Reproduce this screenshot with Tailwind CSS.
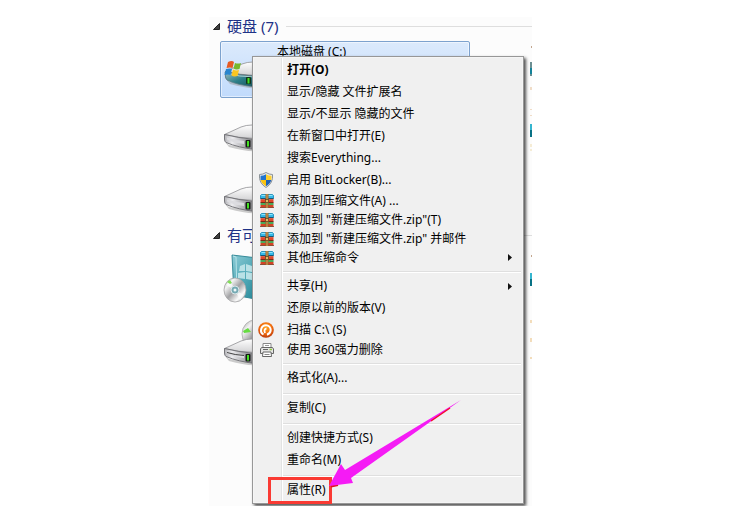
<!DOCTYPE html>
<html lang="zh-CN">

<head>
    <meta charset="UTF-8">
    <meta name="viewport" content="width=device-width, initial-scale=1.0">
    <title>计算机</title>
    <script src="https://cdn.jsdelivr.net/npm/@tailwindcss/browser@4"></script>
</head>

<body class="bg-white pt-[17px] font-['Noto_Sans','Noto_Sans_CJK_SC',sans-serif] text-xs text-black">
    <!-- shared drawings -->
    <svg class="absolute size-0">
        <defs>
            <linearGradient id="top" x1="0" y1="0" x2="0" y2="1">
                <stop offset="0" stop-color="#fff" />
                <stop offset="1" stop-color="#d2d2d4" />
            </linearGradient>
            <linearGradient id="front" x1="0" y1="0" x2="1" y2="0">
                <stop offset="0" stop-color="#b4b4b8" />
                <stop offset=".25" stop-color="#ececef" />
                <stop offset=".6" stop-color="#b4b4b8" />
                <stop offset="1" stop-color="#77777b" />
            </linearGradient>
            <linearGradient id="disc" x1="0" y1="0" x2="1" y2="1">
                <stop offset="0" stop-color="#9d9d9d" />
                <stop offset=".25" stop-color="#f4f4f4" />
                <stop offset=".5" stop-color="#a2a2a4" />
                <stop offset=".75" stop-color="#fafafa" />
                <stop offset="1" stop-color="#999" />
            </linearGradient>
            <linearGradient id="teal" x1="0" y1="0" x2="1" y2="1">
                <stop offset="0" stop-color="#8ccbd6" />
                <stop offset=".5" stop-color="#4ba5b3" />
                <stop offset="1" stop-color="#16798a" />
            </linearGradient>
            <linearGradient id="tealfront" x1="0" y1="0" x2="1" y2="1">
                <stop offset="0" stop-color="#9fbcc2" />
                <stop offset=".5" stop-color="#2c7f88" />
                <stop offset="1" stop-color="#174f59" />
            </linearGradient>
            <radialGradient id="orange" cx=".5" cy=".35" r=".65">
                <stop offset="0" stop-color="#ffa51c" />
                <stop offset=".6" stop-color="#ef6a10" />
                <stop offset="1" stop-color="#b9370a" />
            </radialGradient>
            <symbol id="drive" viewBox="0 0 48 28">
                <path d="M1 18 5 23Q22 28 34 27L46 20V16L30 25 5 21Z" fill="#999" opacity=".5" />
                <path d="M.5 10.500 17 3Q22 1 28 1L45 5 31 14.500Q14 14 .5 10.500Z" fill="url(#top)" stroke="#8f8f93" stroke-width=".8" />
                <path d="M.5 10.500Q14 14 31 15.500V25.500Q14 23.500 2 18.500 .5 17.500 .5 15Z" fill="url(#front)" stroke="#6a6a6e" stroke-width=".9" />
                <path d="M31 15 45 5V15L31 25Z" fill="#85858a" />
                <path d="M3 13.500Q11 16 20 17V20Q10 19 3 15.500Z" fill="#dcdce0" />
                <rect x="21.500" y="16" width="5" height="7.500" rx="1" fill="#171a17" />
                <rect x="23" y="17" width="2" height="5.500" fill="#43e022" />
            </symbol>
            <symbol id="rar" viewBox="0 0 14 14">
                <path d="M1.500.5h11l1 1v3H.5v-3z" fill="#35b8e8" stroke="#1584b0" stroke-width=".8" />
                <path d="M1.500 1.500h11" stroke="#8be4fb" />
                <path d="M.5 4.700h13" stroke="#124a66" />
                <rect x=".5" y="5.200" width="13" height="3.300" fill="#e0472a" />
                <path d="M.5 8.500h13" stroke="#7b2b16" />
                <rect x=".5" y="9" width="13" height="2" fill="#3d9c52" />
                <path d="M1 10h12" stroke="#67c66f" stroke-width=".7" />
                <rect x=".5" y="11" width="13" height="2.500" fill="#d54225" />
                <path d="M0 13.600h14" stroke="#6b3015" stroke-width=".8" />
                <rect x="5.500" y="0" width="3" height="14" fill="#97652c" />
                <path d="M7 0v14" stroke="#d5a45a" />
                <rect x="5.500" y="5.500" width="3" height="3" fill="#e5b861" stroke="#56401e" stroke-width=".7" />
            </symbol>
        </defs>
    </svg>

    <main class="relative mx-auto h-[489px] w-[323px] overflow-hidden bg-[#fcfcfc]">
        <!-- 硬盘 -->
        <section>
            <h2 class="flex h-[18px] items-center text-[15px] leading-[18px] whitespace-nowrap text-[#1e3287]">
                <svg class="mr-[7px] ml-1 size-[7px] shrink-0" viewBox="0 0 7 7"><path d="M6.500.5v6h-6z" fill="#404040" stroke="#222" /></svg>
                硬盘 (7)
                <span class="ml-2 h-px grow bg-[#dedede]"></span>
            </h2>
            <div class="flex justify-between pt-1.5 pl-[11px]">
                <div class="flex w-[250px] flex-col gap-[5px]">
                    <div class="flex h-[57px] rounded-xs border border-[#7da2ce] bg-linear-to-b from-[#dceafc] to-[#c1dbfc] inset-ring inset-ring-white/50">
                        <svg class="h-[55px] w-[56px] shrink-0" viewBox="0 0 56 55">
                            <use href="#drive" x="4" y="19" width="48" height="28" />
                            <path d="M4 30Q16 33 35 34V45Q15 43 6 38 4 36 4 30Z" fill="url(#tealfront)" stroke="#5f7f86" stroke-width=".8" />
                            <path d="M5 31Q18 35 34 35" fill="none" stroke="#a9cfd3" />
                            <rect x="25" y="35" width="5" height="7" rx="1" fill="#12331a" />
                            <rect x="26.500" y="36" width="2" height="5.500" fill="#43e022" />
                            <path d="M7 20Q11 18 13 20L11.500 26Q9 25 5.500 26Z" fill="#e65a24" />
                            <path d="M14 21Q17 22 20 21L18.500 27Q15 28 12.500 26.500Z" fill="#77b82c" />
                            <path d="M5 27Q9 26 11 27L9.500 33Q7 32 3.500 33Z" fill="#2986cf" />
                            <path d="M12 27.500Q15 29 18 28L16.500 34Q13 35 10.500 33.500Z" fill="#fbc621" />
                        </svg>
                        <span class="leading-[20px]">本地磁盘 (C:)</span>
                    </div>
                    <div class="h-[57px] pt-[21px] pl-1"><svg class="h-7 w-12"><use href="#drive" /></svg></div>
                    <div class="h-[57px] pt-[21px] pl-1"><svg class="h-7 w-12"><use href="#drive" /></svg></div>
                </div>
                <!-- next column, cut by the window edge -->
                <svg class="h-[181px] w-[2px]" viewBox="0 0 2 181">
                    <path d="M1 6h1" stroke="#8a5020" />
                    <path d="M0 21h2v14H0z" fill="#6c8f93" />
                    <path d="M0 27h2v6H0z" fill="#14839a" />
                    <path d="M1 46v3M1 68v1M1 74v1" stroke="#e4bd93" />
                    <path d="M0 83h2v6H0z" fill="#35b5cf" />
                    <path d="M0 89h2v7H0z" fill="#087285" />
                    <path d="M1 103v3M1 108v2" stroke="#eedcae" />
                </svg>
            </div>
        </section>

        <!-- 有可移动存储的设备 -->
        <section class="pt-1">
            <h2 class="flex h-[18px] items-center text-[15px] leading-[18px] whitespace-nowrap text-[#1e3287]">
                <svg class="mr-[7px] ml-1 size-[7px] shrink-0" viewBox="0 0 7 7"><path d="M6.500.5v6h-6z" fill="#404040" stroke="#222" /></svg>
                有可
                <span class="ml-2 h-px grow bg-[#dedede]"></span>
            </h2>
            <div class="flex justify-between pt-1.5 pl-[11px]">
                <div class="flex w-[250px] flex-col gap-[5px]">
                    <div class="h-[57px]">
                        <svg class="h-[57px] w-[50px]" viewBox="0 0 50 57">
                            <path d="M12 5 46 9V51L14 45Z" fill="url(#teal)" stroke="#378b99" />
                            <path d="M13 6 16 7 17 44" fill="none" stroke="#b6e3e8" />
                            <path d="M20 16 25 14V21H19ZM26 14 32 16V22L26 21ZM18 23 25 22V29L18 28ZM26 22 32 23V30L26 29Z" fill="#b9e1e6" />
                            <ellipse cx="15" cy="40" rx="11" ry="12" fill="url(#disc)" stroke="#a4a4a6" stroke-width=".8" />
                            <path d="M15 40 6 35 10 30ZM15 40 24 45 20 50Z" fill="#fff" opacity=".7" />
                            <path d="m7 32 3-2 2 3-2 1z" fill="#80df56" />
                            <circle cx="15" cy="40" r="4" fill="#76aab3" stroke="#d9e6e8" />
                            <circle cx="15" cy="40" r="1.500" fill="#eef6f7" />
                        </svg>
                    </div>
                    <div class="h-[57px]">
                        <svg class="h-[57px] w-[56px]" viewBox="0 0 56 57">
                            <ellipse cx="35" cy="22" rx="13" ry="14" fill="url(#disc)" stroke="#aaa" stroke-width=".8" />
                            <path d="m23 19 5-3 3 4-7 1z" fill="#65dc40" />
                            <use href="#drive" x="4" y="26" width="48" height="28" />
                            <path d="M7 40.500Q15 43 24 43.500" fill="none" stroke="#444" />
                        </svg>
                    </div>
                </div>
                <svg class="h-[119px] w-[2px]" viewBox="0 0 2 119">
                    <path d="M1 6h1" stroke="#8a5020" />
                    <path d="M0 23h2v6H0z" fill="#35b5cf" />
                    <path d="M0 29h2v7H0z" fill="#087285" />
                    <path d="M1 70v3M1 88v4M1 107v2" stroke="#e9bd7b" />
                </svg>
            </div>
        </section>

        <!-- context menu -->
        <ul class="absolute top-[39px] left-[43px] w-[272px] border border-[#979797] bg-[#f0f0f0] bg-[linear-gradient(90deg,transparent_28px,#e2e3e3_28px,#e2e3e3_29px,#fff_29px,#fff_30px,transparent_30px)] p-0.5 whitespace-nowrap shadow-[2px_2px_3px_#000000b0] inset-ring inset-ring-[#f5f5f5]">
            <li><button class="flex h-[22px] w-full items-center pl-8 font-bold">打开(O)</button></li>
            <li><button class="flex h-[22px] w-full items-center pl-8">显示/隐藏 文件扩展名</button></li>
            <li><button class="flex h-[22px] w-full items-center pl-8">显示/不显示 隐藏的文件</button></li>
            <li><button class="flex h-[22px] w-full items-center pl-8">在新窗口中打开(E)</button></li>
            <li><button class="flex h-[22px] w-full items-center pl-8">搜索Everything...</button></li>
            <li><button class="flex h-[22px] w-full items-center pl-[3px]">
                <svg class="mr-[13px] size-4" viewBox="0 0 16 16">
                    <path d="M8 .5Q11 2.500 14.500 2.500 15.500 11 8 15.500.5 11 1.500 2.500 5 2.500 8 .5Z" fill="#e9ebed" stroke="#8b9298" />
                    <path d="M8 2.200V8H2.700Q2.300 6 2.600 3.800 5.500 3.700 8 2.200Z" fill="#2375cf" />
                    <path d="M8 2.200V8h5.300Q13.700 6 13.400 3.800 10.500 3.700 8 2.200Z" fill="#ffd02c" />
                    <path d="M8 8H2.700Q3.800 12 8 14.300Z" fill="#fbc30f" />
                    <path d="M8 8h5.300Q12.200 12 8 14.300Z" fill="#2063b5" />
                </svg>启用 BitLocker(B)...</button></li>
            <li><button class="flex h-[19px] w-full items-center pl-[5px]"><svg class="mr-[13px] size-3.5"><use href="#rar" /></svg>添加到压缩文件(A) ...</button></li>
            <li><button class="flex h-[19px] w-full items-center pl-[5px]"><svg class="mr-[13px] size-3.5"><use href="#rar" /></svg>添加到 "新建压缩文件.zip"(T)</button></li>
            <li><button class="flex h-[19px] w-full items-center pl-[5px]"><svg class="mr-[13px] size-3.5"><use href="#rar" /></svg>添加到 "新建压缩文件.zip" 并邮件</button></li>
            <li><button class="flex h-[19px] w-full items-center pl-[5px]"><svg class="mr-[13px] size-3.5"><use href="#rar" /></svg>其他压缩命令<svg class="mr-2 ml-auto h-[7px] w-[5px]" viewBox="0 0 5 7"><path d="M0 0 4 3.500 0 7z" fill="#111" /></svg></button></li>
            <li class="h-2 pt-1 pl-7"><hr class="h-[2px] border-t border-[#dfdfdf] bg-white"></li>
            <li><button class="flex h-[22px] w-full items-center pl-8">共享(H)<svg class="mr-2 ml-auto h-[7px] w-[5px]" viewBox="0 0 5 7"><path d="M0 0 4 3.500 0 7z" fill="#111" /></svg></button></li>
            <li><button class="flex h-[22px] w-full items-center pl-8">还原以前的版本(V)</button></li>
            <li><button class="flex h-[22px] w-full items-center pl-[3px]">
                <svg class="mr-[13px] size-4" viewBox="0 0 16 16">
                    <circle cx="8" cy="8" r="7.800" fill="url(#orange)" />
                    <path d="M5.500 12.500A5 5 0 0 1 8 3.200 4.700 4.700 0 0 1 12.700 8Q12.500 11.500 9 12.800" fill="none" stroke="#fff" stroke-width="2" />
                    <path d="M8.500 6.500Q5.500 7 7 11" fill="none" stroke="#fff" stroke-width="1.800" />
                </svg>扫描 C:\ (S)</button></li>
            <li><button class="flex h-[18px] w-full items-center pl-[5px]">
                <svg class="mr-[13px] size-3.5" viewBox="0 0 14 14">
                    <path d="M3 5V.5h8V5" fill="#fff" stroke="#888" />
                    <path d="M5 2.500h4" stroke="#999" />
                    <path d="M1.500 4.500h11l1 1.500v4.500H.5V6z" fill="#e5e5e5" stroke="#666" />
                    <path d="M3 6.500h5" stroke="#666" />
                    <path d="M9.500 6.500h2.500" stroke="#8cc63c" stroke-width="1.500" />
                    <path d="M3 9h8l.5 4.500h-9z" fill="#fff" stroke="#666" />
                    <path d="M4.500 11.500h5" stroke="#888" />
                </svg>使用 360强力删除</button></li>
            <li class="h-2 pt-1 pl-7"><hr class="h-[2px] border-t border-[#dfdfdf] bg-white"></li>
            <li><button class="flex h-[22px] w-full items-center pl-8">格式化(A)...</button></li>
            <li class="h-2 pt-1 pl-7"><hr class="h-[2px] border-t border-[#dfdfdf] bg-white"></li>
            <li><button class="flex h-[22px] w-full items-center pl-8">复制(C)</button></li>
            <li class="h-2 pt-1 pl-7"><hr class="h-[2px] border-t border-[#dfdfdf] bg-white"></li>
            <li><button class="flex h-[22px] w-full items-center pl-8">创建快捷方式(S)</button></li>
            <li><button class="flex h-[22px] w-full items-center pl-8">重命名(M)</button></li>
            <li class="h-2 pt-1 pl-7"><hr class="h-[2px] border-t border-[#dfdfdf] bg-white"></li>
            <li><button class="flex h-[22px] w-full items-center pl-8">属性(R)</button></li>
        </ul>

        <!-- highlight box and arrow -->
        <div class="pointer-events-none absolute top-[460px] left-[59px] h-[27px] w-[64px] border-3 border-[#fa3a33]"></div>
        <svg class="pointer-events-none absolute top-[380px] left-[118px] h-[92px] w-[136px]" viewBox="0 0 136 92">
            <path d="M4 89.500 11 88" stroke="#e01020" stroke-width="2" />
            <path d="M134 3 18 73 14 67 2 89 26 86 24 81Z" fill="#f51bf5" />
            <path d="M104 24 123 11" stroke="#f01028" stroke-width="1.500" />
        </svg>
    </main>
</body>

</html>
